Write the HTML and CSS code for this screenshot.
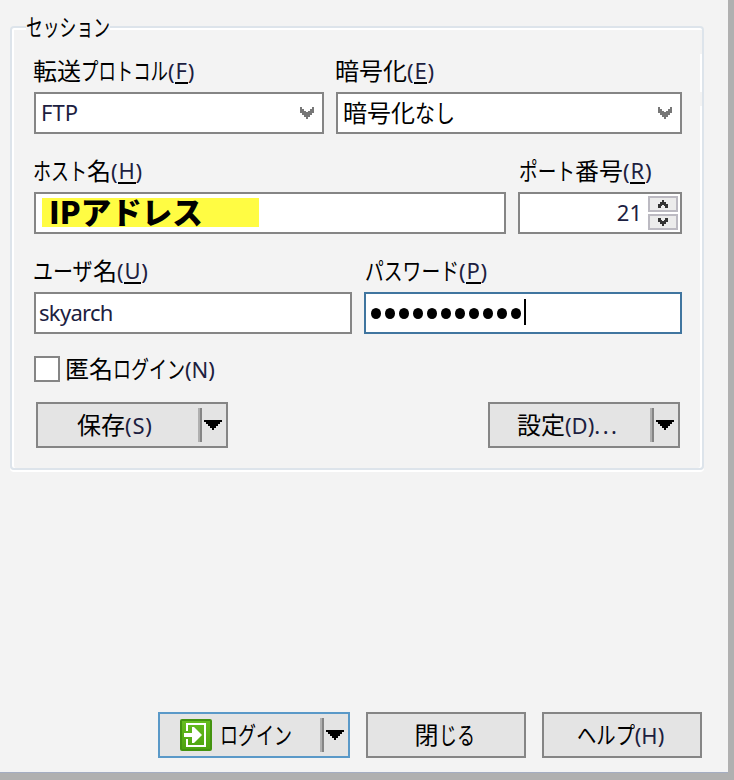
FILE: index.html
```html
<!DOCTYPE html>
<html lang="ja">
<head>
<meta charset="utf-8">
<title>ログイン</title>
<link rel="stylesheet" href="styles.css">
</head>
<body>
<main class="window">
  <section class="group">
    <div class="legend"><span class="kana k-session">セッション</span></div>
    <div class="row row-protocol">
      <div>
        <div class="label">転送<span class="kana k-protocol">プロトコル</span><span class="key">(<u>F</u>)</span></div>
        <div class="field select"><span class="latin">FTP</span><svg class="chev" viewBox="0 0 14 12"><path d="M0 0h2v2h2v2h2v1h2V4h2V2h2V0h2v6h-2v2h-2v2H8v2H6v-2H4V8H2V6H0z"/></svg></div>
      </div>
      <div>
        <div class="label">暗号化<span class="key">(<u>E</u>)</span></div>
        <div class="field select"><span class="cjk">暗号化<span class="kana k-none">なし</span></span><svg class="chev" viewBox="0 0 14 12"><path d="M0 0h2v2h2v2h2v1h2V4h2V2h2V0h2v6h-2v2h-2v2H8v2H6v-2H4V8H2V6H0z"/></svg></div>
      </div>
    </div>
    <div class="row row-host">
      <div>
        <div class="label"><span class="kana k-host">ホスト</span>名<span class="key">(<u>H</u>)</span></div>
        <div class="field host"><span class="mark"><span class="mark-text">IPアドレス</span></span></div>
      </div>
      <div>
        <div class="label label-port"><span class="kana k-port">ポート</span>番号<span class="key">(<u>R</u>)</span></div>
        <div class="field port">
          <span class="latin">21</span>
          <span class="spin">
            <i><svg viewBox="0 0 10 8"><path d="M4 0h2v2h2v2h2v4H7V6H6V5H4v1H3v2H0V4h2V2h2z"/></svg></i>
            <i><svg viewBox="0 0 10 8"><path d="M4 8h2V6h2V4h2V0H7v2H6v1H4V2H3V0H0v4h2v2h2z"/></svg></i>
          </span>
        </div>
      </div>
    </div>
    <div class="row row-user">
      <div>
        <div class="label"><span class="kana k-user">ユーザ</span>名<span class="key">(<u>U</u>)</span></div>
        <div class="field user"><span class="latin name">skyarch</span></div>
      </div>
      <div>
        <div class="label label-pass"><span class="kana k-pass">パスワード</span><span class="key">(<u>P</u>)</span></div>
        <div class="field pass"><span class="dots"><b></b><b></b><b></b><b></b><b></b><b></b><b></b><b></b><b></b><b></b><b></b></span><span class="caret"></span></div>
      </div>
    </div>
    <div class="check"><span class="box"></span><div class="label">匿名<span class="kana k-login">ログイン</span><span class="key">(N)</span></div></div>
    <div class="actions">
      <div class="btn split"><div class="label save">保存<span class="key">(S)</span></div><span class="bar"></span><svg class="tri" viewBox="0 0 18 10"><path d="M0 0h18v2h-2v2h-2v2h-2v2h-2v2H8V8H6V6H4V4H2V2H0z"/></svg></div>
      <div class="btn split"><div class="label set">設定<span class="key">(D)<span class="ell">...</span></span></div><span class="bar"></span><svg class="tri" viewBox="0 0 18 10"><path d="M0 0h18v2h-2v2h-2v2h-2v2h-2v2H8V8H6V6H4V4H2V2H0z"/></svg></div>
    </div>
  </section>
  <footer class="footer">
    <div class="btn split primary">
      <svg class="icon" viewBox="0 0 32 32">
        <defs><linearGradient id="g" x1="0" y1="0" x2="0" y2="1"><stop offset="0" stop-color="#66bd1f"/><stop offset="1" stop-color="#4da30f"/></linearGradient></defs>
        <rect width="32" height="32" rx="2" fill="#43930f"/>
        <rect x="2" y="2" width="28" height="28" fill="url(#g)"/>
        <path d="M7 12V5h18v22H7v-7" fill="none" stroke="#fff" stroke-width="2"/>
        <path d="M4 14h8V8h2l8 8-8 8h-2v-6H4z" fill="#fff"/>
      </svg>
      <div class="label"><span class="kana k-btn">ログイン</span></div><span class="bar"></span><svg class="tri" viewBox="0 0 18 10"><path d="M0 0h18v2h-2v2h-2v2h-2v2h-2v2H8V8H6V6H4V4H2V2H0z"/></svg>
    </div>
    <div class="btn close"><div class="label">閉<span class="kana k-close">じる</span></div></div>
    <div class="btn help"><div class="label"><span class="kana k-help">ヘルプ</span><span class="key">(H)</span></div></div>
  </footer>
</main>
</body>
</html>
```
FILE: styles.css
```css
* { box-sizing: border-box; }
body { margin: 0; background: #b0b0b0; overflow: hidden; }
svg { display: block; flex: none; }
.window {
  width: 728px; height: 773px; padding: 26px 24px 0 10px;
  background: #f3f3f3; border-bottom: 1px solid #a4adc2;
  font: 24px/24px "Noto Sans CJK JP", sans-serif; color: #000;
}
.group {
  position: relative; height: 444px; padding: 30px 20px 0 22px;
  border: 2px solid #dde4eb; border-radius: 4px;
  box-shadow: inset 2px 0 #fff, inset 0 2px #fff, inset -2px 0 #fff, 0 2px #fff;
}
.group::after {
  content: ""; position: absolute; right: 0; top: 2px; width: 2px; height: 76px;
  background: linear-gradient(#f3f3f3 24px, #fff 24px 62px, #f3f3f3 62px);
}
.legend {
  position: absolute; left: 14px; top: -16px; height: 28px; width: 84px;
  background: #f3f3f3; white-space: nowrap; line-height: 28px;
}
.label, .cjk { height: 24px; line-height: 24px; white-space: nowrap; }
.row .label { margin-left: -1px; }
.row .label-port, .row .label-pass { margin-left: 1px; }
.kana {
  --full: calc(var(--n) * 24px);
  display: inline-block; width: var(--full); height: 24px; line-height: 24px;
  transform: scaleX(calc(var(--w) / var(--n) / 24)); transform-origin: 0 0;
  margin-right: calc(var(--w) * 1px - var(--full)); vertical-align: top;
}
.legend .kana { height: 28px; line-height: 28px; }
.k-session { --n: 5; --w: 84; }
.k-protocol { --n: 5; --w: 87; }
.k-none { --n: 2; --w: 40; }
.k-host { --n: 3; --w: 54; }
.k-port { --n: 3; --w: 56; }
.k-user { --n: 3; --w: 60; }
.k-pass { --n: 5; --w: 94; }
.k-login { --n: 4; --w: 72; }
.k-btn { --n: 4; --w: 72; }
.k-close { --n: 2; --w: 36; }
.k-help { --n: 3; --w: 58; }
.key, .latin { font-family: "Noto Sans", sans-serif; font-size: 22px; color: #1c2040; }
.key { letter-spacing: 0; line-height: 24px; }
.row .key, .save .key { letter-spacing: .8px; }
.key u { text-decoration: none; display: inline-block; height: 26px; vertical-align: top; border-bottom: 2px solid #000; }
.row { display: grid; column-gap: 12px; height: 76px; margin-bottom: 24px; }
.row-protocol { grid-template-columns: 290px 346px; }
.row-host { grid-template-columns: 472px 164px; }
.row-user { grid-template-columns: 318px 318px; margin-bottom: 22px; }
.field {
  display: flex; align-items: center; height: 42px; margin-top: 10px;
  border: 2px solid #858585; background: #fff;
}
.field .latin, .field .cjk { margin-bottom: 2px; }
.select { justify-content: space-between; padding: 0 8px 0 5px; }
.chev { width: 14px; height: 12px; fill: #777; shape-rendering: crispEdges; }
.host { padding-left: 6px; }
.mark { width: 217px; height: 29px; background: #fffc43; padding-left: 7px; margin-bottom: 1px; }
.mark-text { display: block; font-weight: 900; font-size: 30.5px; line-height: 29px; margin-top: -1px; white-space: nowrap; }
.port { justify-content: flex-end; padding-right: 2px; }
.port .latin { margin-right: 6px; }
.spin { display: grid; gap: 2px; }
.spin i {
  display: grid; place-items: center; width: 30px; height: 16px;
  border: 2px solid #bcbac2; background: #ececec;
}
.spin svg { width: 10px; height: 8px; fill: #333; shape-rendering: crispEdges; }
.user { padding-left: 3px; }
.name { letter-spacing: -.7px; }
.pass { border-color: #40759f; padding-left: 5px; }
.dots { display: flex; gap: 4px; }
.dots b { width: 10px; height: 11px; border-radius: 50%; background: #000; }
.caret { width: 2px; height: 26px; margin: 0 0 2px 3px; background: #000; }
.check { display: flex; gap: 5px; height: 26px; }
.box { width: 26px; height: 26px; border: 2px solid #858585; background: #fff; }
.actions { display: flex; justify-content: space-between; margin: 20px 2px 0; }
.btn {
  display: flex; align-items: center; justify-content: center;
  width: 160px; height: 46px; border: 2px solid #858585; background: #e4e4e4;
}
.btn .label { margin-bottom: 2px; }
.close, .help { padding-right: 3px; }
.split { width: 192px; padding-right: 4px; justify-content: flex-start; }
.save { margin-left: 39px; }
.set { margin-left: 27px; }
.ell { letter-spacing: 2.5px; }
.bar { width: 4px; height: 34px; margin-left: auto; border-left: 2px solid #b0b0b0; border-right: 2px solid #858585; }
.tri { width: 18px; height: 10px; margin-left: 2px; shape-rendering: crispEdges; }
.footer { display: flex; gap: 16px; margin: 242px 0 0 148px; }
.primary { border-color: #5a99c8; }
.icon { width: 32px; height: 32px; margin: 0 8px 0 20px; }
```
